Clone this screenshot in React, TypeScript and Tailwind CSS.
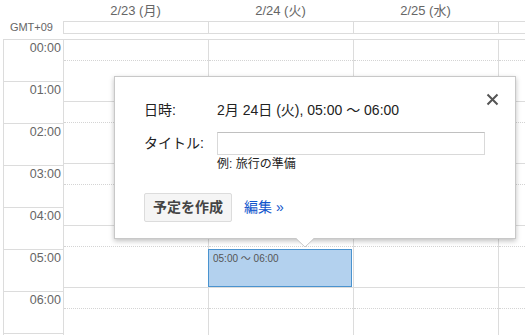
const days = ["2/23 (月)", "2/24 (火)", "2/25 (水)", ""];
const hours = ["00:00", "01:00", "02:00", "03:00", "04:00", "05:00", "06:00", ""];

function HourCell() {
  return (
    <div className="h-[42px] border-b border-[#dcdcdc]">
      <div className="mt-[20px] border-t border-dotted border-[#d4d4d4]" />
    </div>
  );
}

function QuickAdd() {
  return (
    <div className="absolute left-[114px] top-[76px] h-[163px] w-[402px] border border-[#c8c8c8] bg-white px-[29px] pt-[23px] text-[14px] text-[#222] shadow-[0_2px_5px_rgba(0,0,0,0.25)]">
      <button className="absolute right-[16px] top-[16px] text-[#555]">
        <svg width="13" height="13" viewBox="0 0 13 13">
          <path d="M1.5 1.5 L11.5 11.5 M11.5 1.5 L1.5 11.5" stroke="#555" strokeWidth="2" />
        </svg>
      </button>

      <div className="flex h-[20px] items-center leading-[20px]">
        <div className="w-[73px]">日時:</div>
        <div>2月 24日 (火), 05:00 ～ 06:00</div>
      </div>

      <div className="mt-[12px] flex items-center">
        <div className="w-[73px]">タイトル:</div>
        <input className="h-[23px] w-[268px] border border-[#d9d9d9] border-t-[#c0c0c0] outline-none" />
      </div>

      <div className="ml-[73px] mt-[1px] text-[12px] leading-[16px]">例: 旅行の準備</div>

      <div className="mt-[21px] flex items-center">
        <button className="h-[29px] w-[88px] rounded-[2px] border border-[#dcdcdc] bg-[#f5f5f5] text-[14px] font-bold text-[#444]">
          予定を作成
        </button>
        <a className="ml-[12px] text-[14px] text-[#1155cc]">編集 »</a>
      </div>

      {/* pointer */}
      <svg className="absolute left-[181px] top-[161px]" width="18" height="10" viewBox="0 0 18 10">
        <polygon points="0,0 9,9 18,0" fill="white" />
        <polyline points="0,0.5 9,9 18,0.5" fill="none" stroke="#c8c8c8" strokeWidth="1" />
      </svg>
    </div>
  );
}

export default function App() {
  return (
    <div
      className="relative h-[335px] w-[525px] overflow-hidden bg-white"
      style={{ fontFamily: '"Liberation Sans", Arial, "Noto Sans CJK JP", sans-serif' }}
    >
      {/* day header */}
      <div className="flex h-[21px] items-center text-[13px] text-[#666]">
        <div className="w-[63px] shrink-0" />
        {days.map((d, i) => (
          <div key={i} className="w-[145px] shrink-0 text-center">
            {d}
          </div>
        ))}
      </div>

      {/* all day row */}
      <div className="flex">
        <div className="w-[63px] shrink-0 pr-[10px] text-right text-[11px] leading-[13px] text-[#666]">GMT+09</div>
        <div className="flex h-[13px] border-y border-[#dcdcdc]">
          {days.map((d, i) => (
            <div key={i} className="w-[145px] shrink-0 border-l border-[#dcdcdc]" />
          ))}
        </div>
      </div>

      {/* grid */}
      <div className="ml-[3px] mt-[5px] flex border-l border-t border-[#dcdcdc]">
        <div className="w-[59px] shrink-0">
          {hours.map((h, i) => (
            <div key={i} className="h-[42px] border-b border-[#dcdcdc] pr-[2px] pt-[1px] text-right text-[12.5px] leading-[14px] text-[#666]">
              {h}
            </div>
          ))}
        </div>
        {days.map((d, i) => (
          <div key={i} className="w-[145px] shrink-0 border-l border-[#dcdcdc]">
            {hours.map((h, j) => (
              <HourCell key={j} />
            ))}
          </div>
        ))}
      </div>

      {/* event */}
      <div className="absolute left-[208px] top-[249px] h-[38px] w-[144px] border border-[#4a93cf] bg-[#b3d1ee] px-[4px] pt-[2px] text-[10px] leading-[13px] text-[#555]">
        05:00 ～ 06:00
      </div>

      <QuickAdd />
    </div>
  );
}
